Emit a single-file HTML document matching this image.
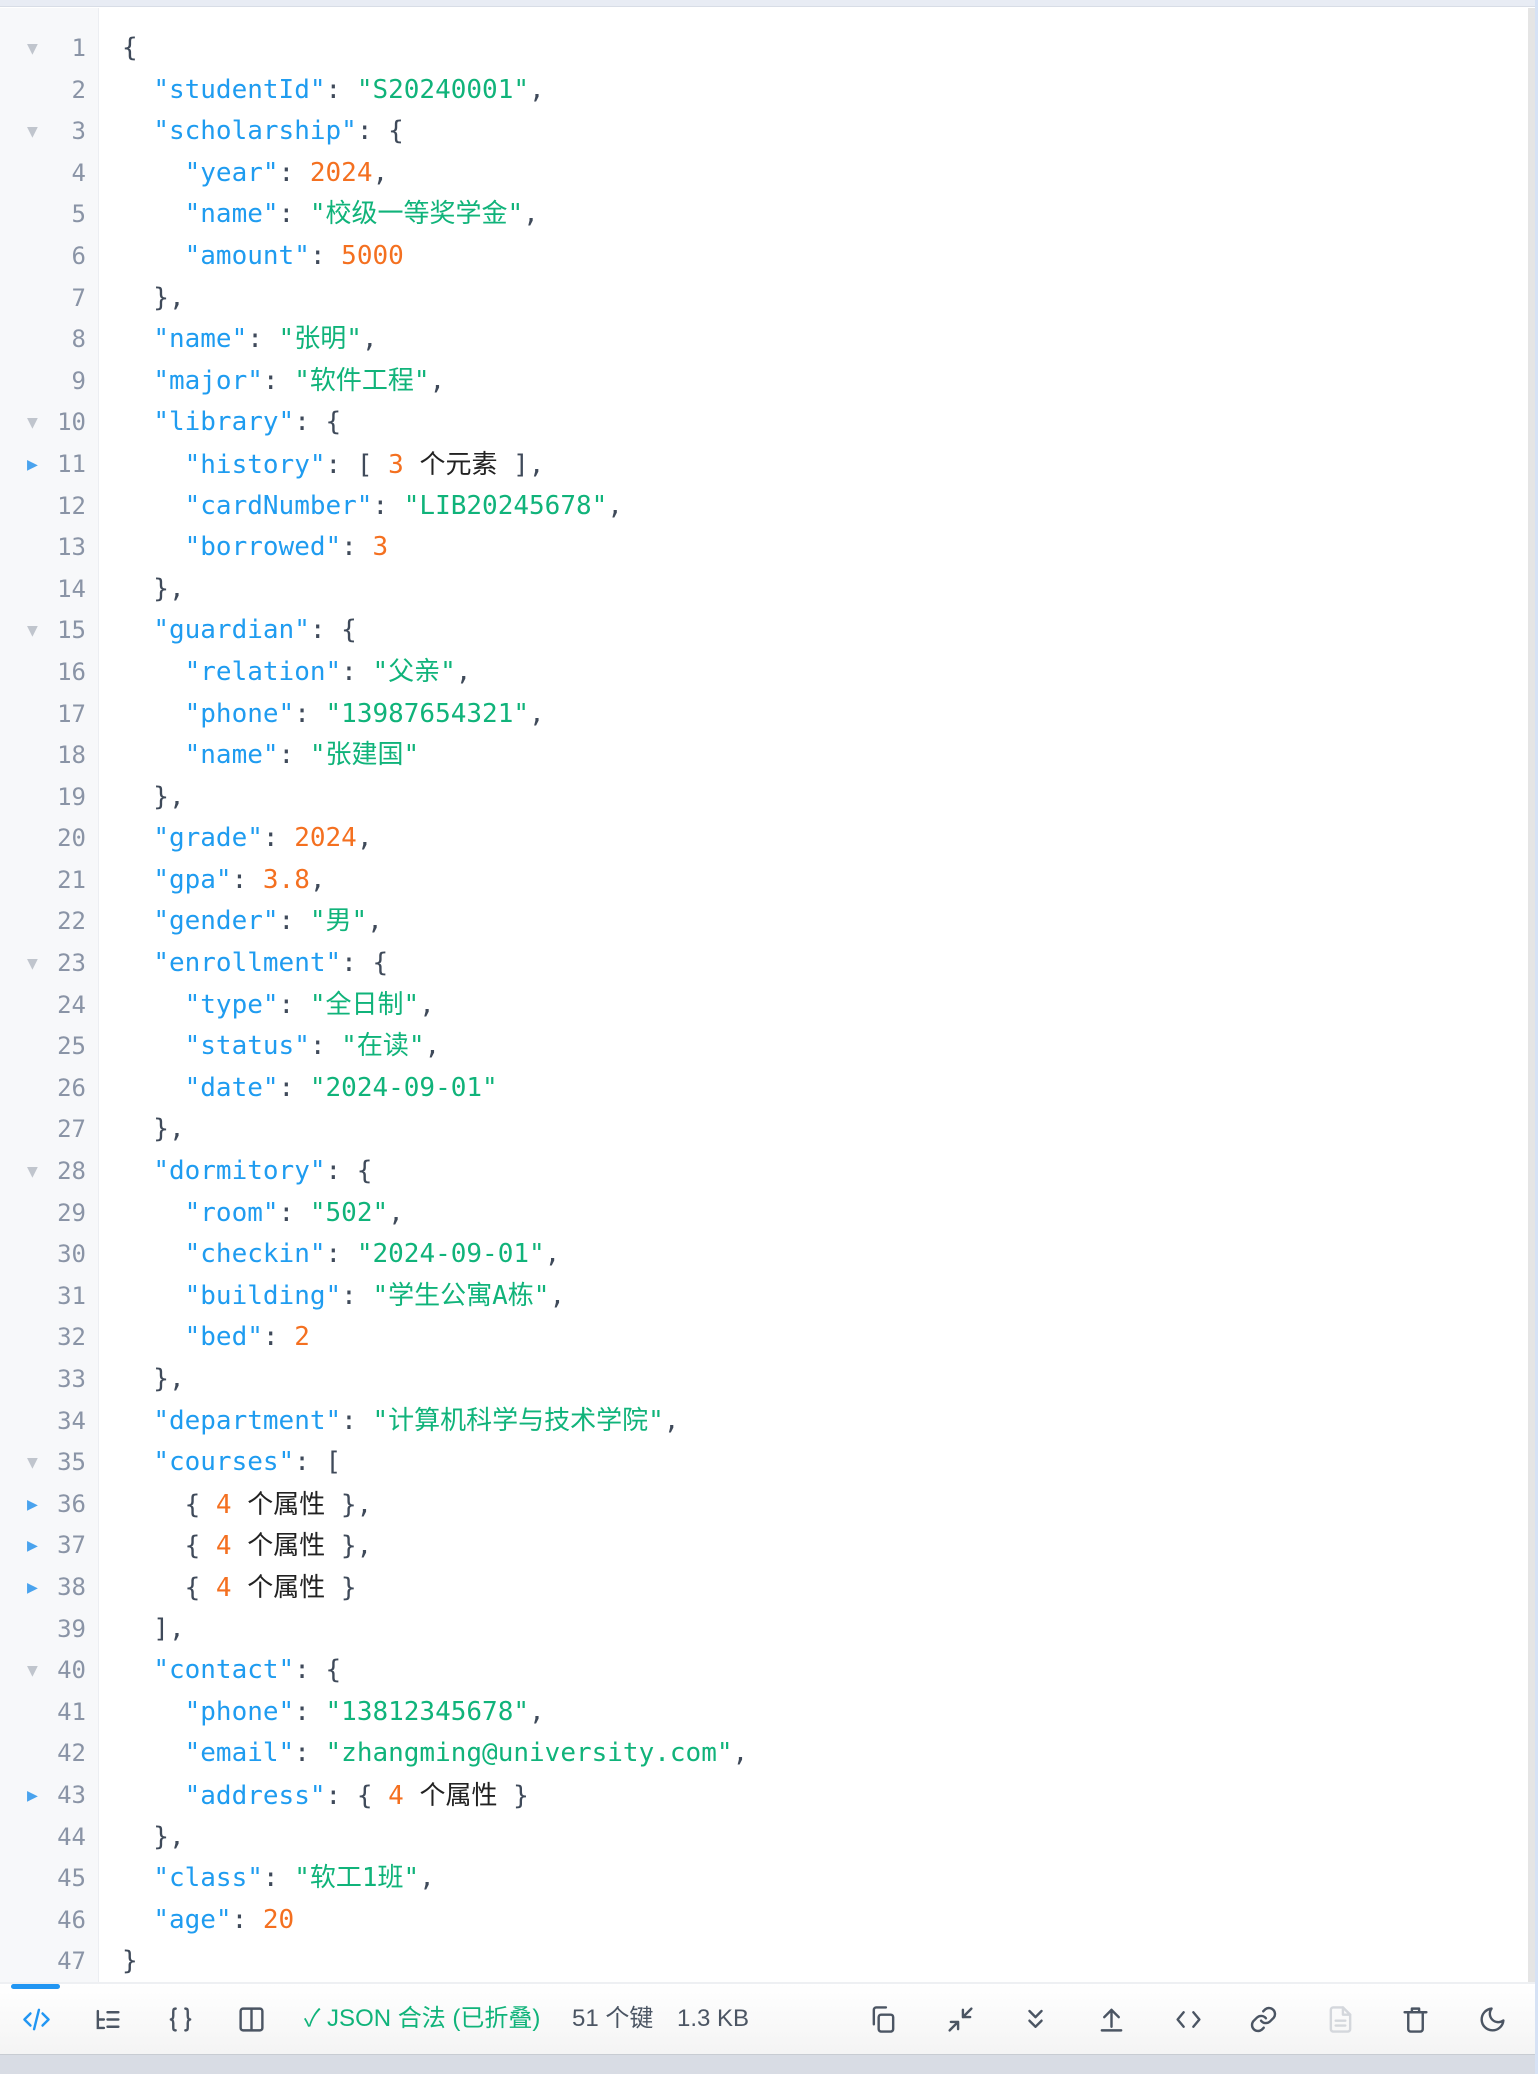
<!DOCTYPE html>
<html><head><meta charset="utf-8"><style>
*{margin:0;padding:0;box-sizing:border-box}
html,body{width:1538px;height:2074px;overflow:hidden;background:#fff}
body{position:relative;font-family:"DejaVu Sans Mono","Noto Sans CJK SC",monospace}
.top{position:absolute;left:0;top:0;width:1538px;height:7px;background:#e8ecf4;border-bottom:1px solid #d8dde6}
.gut{position:absolute;left:0;top:8px;width:99px;height:1974px;background:#f7f8fa;border-right:1px solid #eceef2}
.ed{position:absolute;left:0;top:28px;width:1527px}
.r{height:41.6px;line-height:41.6px;font-size:26px;white-space:pre;position:relative;color:#3f4a5a}
.ln{position:absolute;left:0;width:86px;text-align:right;color:#8a94a6;font-size:24px}
.ar{position:absolute;left:27px;font-size:18px;color:#c0c5cd}
.ar.b{color:#4aa3ee}
.c{position:absolute;left:122px}
.k{color:#1f9cf0}.s{color:#10b37a}.n{color:#f47020}
.z{font-family:"Liberation Sans","Noto Sans CJK SC",sans-serif;color:#222}
.sb{position:absolute;left:1528px;top:8px;width:7px;height:1974px;background:#e5e5e5}
.sb2{position:absolute;left:1535px;top:0;width:3px;height:2074px;background:#d6e2f5}
.bar{position:absolute;left:0;top:1982px;width:1535px;height:72px;border-top:2px solid #eef0f3;background:linear-gradient(#fff,#f4f4f4)}
.bot{position:absolute;left:0;top:2054px;width:1538px;height:20px;background:#d8dce4;border-top:1px solid #c8ccd2}
.ind{position:absolute;left:11px;top:1984px;width:49px;height:5px;border-radius:3px;background:#2196f3}
.ic{position:absolute;top:2005px;width:29px;height:29px}
.st{position:absolute;top:2004px;font-family:"Liberation Sans","Noto Sans CJK SC",sans-serif;font-size:24px;line-height:30px;color:#4b5563}
</style></head><body>
<div class="top"></div>
<div class="gut"></div>
<div class="ed">
<div class="r"><span class="ar">▼</span><span class="ln">1</span><span class="c">{</span></div>
<div class="r"><span class="ln">2</span><span class="c">  <span class="k">"studentId"</span>: <span class="s">"S20240001"</span>,</span></div>
<div class="r"><span class="ar">▼</span><span class="ln">3</span><span class="c">  <span class="k">"scholarship"</span>: {</span></div>
<div class="r"><span class="ln">4</span><span class="c">    <span class="k">"year"</span>: <span class="n">2024</span>,</span></div>
<div class="r"><span class="ln">5</span><span class="c">    <span class="k">"name"</span>: <span class="s">"校级一等奖学金"</span>,</span></div>
<div class="r"><span class="ln">6</span><span class="c">    <span class="k">"amount"</span>: <span class="n">5000</span></span></div>
<div class="r"><span class="ln">7</span><span class="c">  },</span></div>
<div class="r"><span class="ln">8</span><span class="c">  <span class="k">"name"</span>: <span class="s">"张明"</span>,</span></div>
<div class="r"><span class="ln">9</span><span class="c">  <span class="k">"major"</span>: <span class="s">"软件工程"</span>,</span></div>
<div class="r"><span class="ar">▼</span><span class="ln">10</span><span class="c">  <span class="k">"library"</span>: {</span></div>
<div class="r"><span class="ar b">▶</span><span class="ln">11</span><span class="c">    <span class="k">"history"</span>: [ <span class="n">3</span> <span class="z">个元素</span> ],</span></div>
<div class="r"><span class="ln">12</span><span class="c">    <span class="k">"cardNumber"</span>: <span class="s">"LIB20245678"</span>,</span></div>
<div class="r"><span class="ln">13</span><span class="c">    <span class="k">"borrowed"</span>: <span class="n">3</span></span></div>
<div class="r"><span class="ln">14</span><span class="c">  },</span></div>
<div class="r"><span class="ar">▼</span><span class="ln">15</span><span class="c">  <span class="k">"guardian"</span>: {</span></div>
<div class="r"><span class="ln">16</span><span class="c">    <span class="k">"relation"</span>: <span class="s">"父亲"</span>,</span></div>
<div class="r"><span class="ln">17</span><span class="c">    <span class="k">"phone"</span>: <span class="s">"13987654321"</span>,</span></div>
<div class="r"><span class="ln">18</span><span class="c">    <span class="k">"name"</span>: <span class="s">"张建国"</span></span></div>
<div class="r"><span class="ln">19</span><span class="c">  },</span></div>
<div class="r"><span class="ln">20</span><span class="c">  <span class="k">"grade"</span>: <span class="n">2024</span>,</span></div>
<div class="r"><span class="ln">21</span><span class="c">  <span class="k">"gpa"</span>: <span class="n">3.8</span>,</span></div>
<div class="r"><span class="ln">22</span><span class="c">  <span class="k">"gender"</span>: <span class="s">"男"</span>,</span></div>
<div class="r"><span class="ar">▼</span><span class="ln">23</span><span class="c">  <span class="k">"enrollment"</span>: {</span></div>
<div class="r"><span class="ln">24</span><span class="c">    <span class="k">"type"</span>: <span class="s">"全日制"</span>,</span></div>
<div class="r"><span class="ln">25</span><span class="c">    <span class="k">"status"</span>: <span class="s">"在读"</span>,</span></div>
<div class="r"><span class="ln">26</span><span class="c">    <span class="k">"date"</span>: <span class="s">"2024-09-01"</span></span></div>
<div class="r"><span class="ln">27</span><span class="c">  },</span></div>
<div class="r"><span class="ar">▼</span><span class="ln">28</span><span class="c">  <span class="k">"dormitory"</span>: {</span></div>
<div class="r"><span class="ln">29</span><span class="c">    <span class="k">"room"</span>: <span class="s">"502"</span>,</span></div>
<div class="r"><span class="ln">30</span><span class="c">    <span class="k">"checkin"</span>: <span class="s">"2024-09-01"</span>,</span></div>
<div class="r"><span class="ln">31</span><span class="c">    <span class="k">"building"</span>: <span class="s">"学生公寓A栋"</span>,</span></div>
<div class="r"><span class="ln">32</span><span class="c">    <span class="k">"bed"</span>: <span class="n">2</span></span></div>
<div class="r"><span class="ln">33</span><span class="c">  },</span></div>
<div class="r"><span class="ln">34</span><span class="c">  <span class="k">"department"</span>: <span class="s">"计算机科学与技术学院"</span>,</span></div>
<div class="r"><span class="ar">▼</span><span class="ln">35</span><span class="c">  <span class="k">"courses"</span>: [</span></div>
<div class="r"><span class="ar b">▶</span><span class="ln">36</span><span class="c">    { <span class="n">4</span> <span class="z">个属性</span> },</span></div>
<div class="r"><span class="ar b">▶</span><span class="ln">37</span><span class="c">    { <span class="n">4</span> <span class="z">个属性</span> },</span></div>
<div class="r"><span class="ar b">▶</span><span class="ln">38</span><span class="c">    { <span class="n">4</span> <span class="z">个属性</span> }</span></div>
<div class="r"><span class="ln">39</span><span class="c">  ],</span></div>
<div class="r"><span class="ar">▼</span><span class="ln">40</span><span class="c">  <span class="k">"contact"</span>: {</span></div>
<div class="r"><span class="ln">41</span><span class="c">    <span class="k">"phone"</span>: <span class="s">"13812345678"</span>,</span></div>
<div class="r"><span class="ln">42</span><span class="c">    <span class="k">"email"</span>: <span class="s">"zhangming@university.com"</span>,</span></div>
<div class="r"><span class="ar b">▶</span><span class="ln">43</span><span class="c">    <span class="k">"address"</span>: { <span class="n">4</span> <span class="z">个属性</span> }</span></div>
<div class="r"><span class="ln">44</span><span class="c">  },</span></div>
<div class="r"><span class="ln">45</span><span class="c">  <span class="k">"class"</span>: <span class="s">"软工1班"</span>,</span></div>
<div class="r"><span class="ln">46</span><span class="c">  <span class="k">"age"</span>: <span class="n">20</span></span></div>
<div class="r"><span class="ln">47</span><span class="c">}</span></div>
</div>
<div class="sb"></div>
<div class="bar"></div>
<div class="ind"></div>
<div class="bot"></div>
<div class="sb2"></div>

<svg class="ic" style="left:22px" viewBox="0 0 24 24" fill="none" stroke="#2196f3" stroke-width="2" stroke-linecap="round" stroke-linejoin="round"><path d="M7 7l-5 5 5 5M17 7l5 5-5 5M14 4l-4 16"/></svg>
<svg class="ic" style="left:93px" viewBox="0 0 24 24" fill="none" stroke="#4b5563" stroke-width="2" stroke-linecap="round"><path d="M4 5v14h5M4 12h5M12 6h9M12 12h9M12 18h9"/></svg>
<svg class="ic" style="left:166px" viewBox="0 0 24 24" fill="none" stroke="#4b5563" stroke-width="2" stroke-linecap="round" stroke-linejoin="round"><path d="M8 3c-2 0-2 1-2 3v3c0 2-1 3-2 3 1 0 2 1 2 3v3c0 2 0 3 2 3M16 3c2 0 2 1 2 3v3c0 2 1 3 2 3-1 0-2 1-2 3v3c0 2 0 3-2 3"/></svg>
<svg class="ic" style="left:237px" viewBox="0 0 24 24" fill="none" stroke="#4b5563" stroke-width="2"><rect x="3" y="3" width="18" height="18" rx="2"/><path d="M12 3v18"/></svg>
<div class="st" style="left:304px;color:#10b37a">✓ JSON 合法 (已折叠)</div>
<div class="st" style="left:572px">51 个键</div>
<div class="st" style="left:677px">1.3 KB</div>

<svg class="ic" style="left:869px" viewBox="0 0 24 24" fill="none" stroke="#4b5563" stroke-width="2" stroke-linecap="round" stroke-linejoin="round"><rect x="8" y="8" width="12" height="14" rx="2"/><path d="M4 16V4a2 2 0 0 1 2-2h8"/></svg>
<svg class="ic" style="left:946px" viewBox="0 0 24 24" fill="none" stroke="#4b5563" stroke-width="2" stroke-linecap="round" stroke-linejoin="round"><path d="M14 10l7-7M14 4v6h6M10 14l-7 7M4 14h6v6"/></svg>
<svg class="ic" style="left:1021px" viewBox="0 0 24 24" fill="none" stroke="#4b5563" stroke-width="2" stroke-linecap="round" stroke-linejoin="round"><path d="M7 5l5 5 5-5M7 13l5 5 5-5"/></svg>
<svg class="ic" style="left:1097px" viewBox="0 0 24 24" fill="none" stroke="#4b5563" stroke-width="2" stroke-linecap="round" stroke-linejoin="round"><path d="M12 18V4M6 10l6-6 6 6M4 21h16"/></svg>
<svg class="ic" style="left:1174px" viewBox="0 0 24 24" fill="none" stroke="#4b5563" stroke-width="2" stroke-linecap="round" stroke-linejoin="round"><path d="M8 6l-5 6 5 6M16 6l5 6-5 6"/></svg>
<svg class="ic" style="left:1249px" viewBox="0 0 24 24" fill="none" stroke="#4b5563" stroke-width="2" stroke-linecap="round" stroke-linejoin="round"><path d="M10 13a5 5 0 0 0 7.5.5l3-3a5 5 0 0 0-7-7l-1.7 1.7"/><path d="M14 11a5 5 0 0 0-7.5-.5l-3 3a5 5 0 0 0 7 7l1.7-1.7"/></svg>
<svg class="ic" style="left:1326px" viewBox="0 0 24 24" fill="none" stroke="#d4d7dc" stroke-width="2" stroke-linecap="round" stroke-linejoin="round"><path d="M14 2H6a2 2 0 0 0-2 2v16a2 2 0 0 0 2 2h12a2 2 0 0 0 2-2V8z"/><path d="M14 2v6h6M8 13h8M8 17h8"/></svg>
<svg class="ic" style="left:1401px" viewBox="0 0 24 24" fill="none" stroke="#4b5563" stroke-width="2" stroke-linecap="round" stroke-linejoin="round"><path d="M3 6h18M9 6V3h6v3M6 6v14a2 2 0 0 0 2 2h8a2 2 0 0 0 2-2V6"/></svg>
<svg class="ic" style="left:1478px" viewBox="0 0 24 24" fill="none" stroke="#4b5563" stroke-width="2" stroke-linecap="round" stroke-linejoin="round"><path d="M21 12.8A9 9 0 1 1 11.2 3a7 7 0 0 0 9.8 9.8z"/></svg>
</body></html>
